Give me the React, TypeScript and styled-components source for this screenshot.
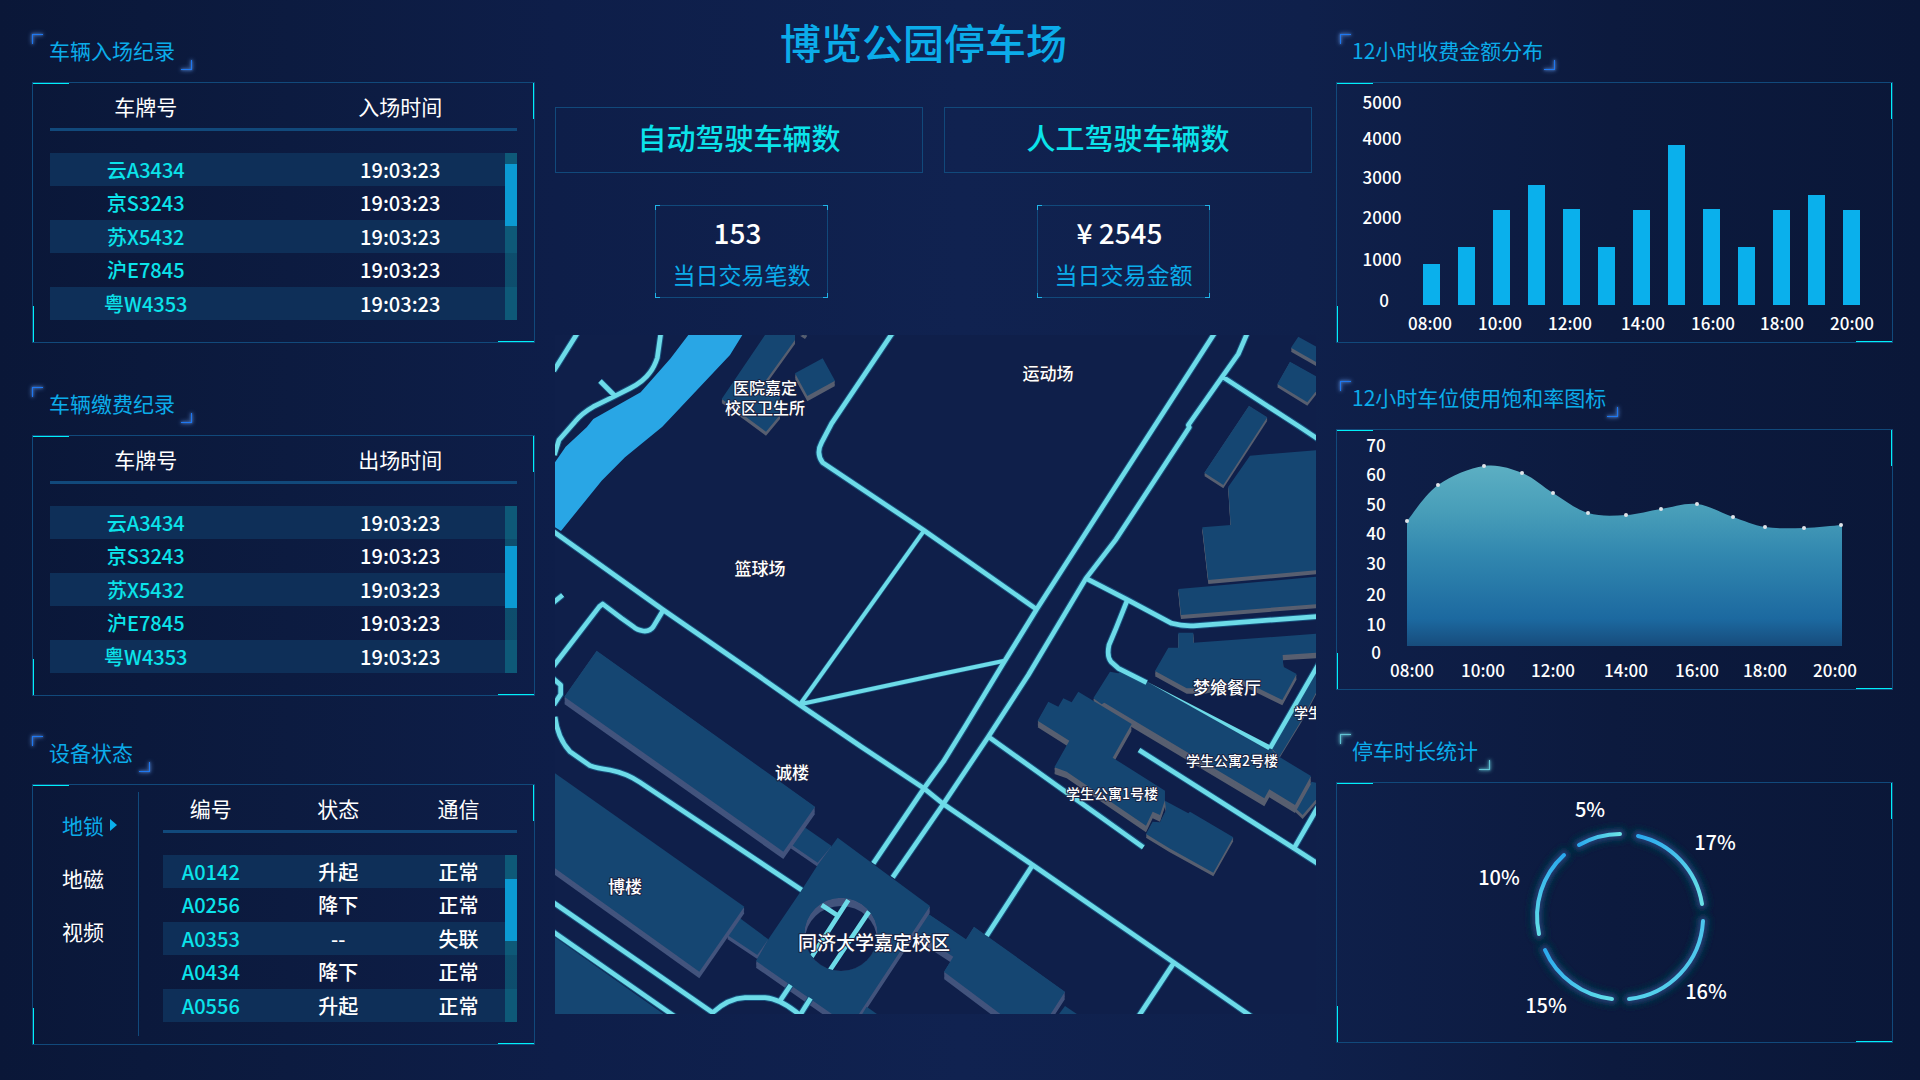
import React, { useState } from "react";
import styled, { createGlobalStyle, css } from "styled-components";

const sans = `"Noto Sans CJK SC", "Noto Sans", sans-serif`;

const color = {
  heading: "#0bacea",
  cyan: "#0be3ea",
  accent: "#00f0f8",
  line: "#11497b",
  stripe: "#0e2f58",
  bar: "#0ab0ec",
  map: "#0f1f4a",
  roof: "#154672",
  road: "#6ddbe8",
};

const GlobalStyle = createGlobalStyle`
  *, *::before, *::after { box-sizing: border-box; }
  body {
    margin: 0;
    min-height: 100vh;
    color: #fff;
    font-family: ${sans};
    background: #0d1c44 linear-gradient(90deg, #0a1738 0%, #0c1b40 15%, #0e1e49 29%, #102250 50%, #0f204b 68%, #0c1a3e 84%, #0a1738 100%);
  }
`;

const Dashboard = styled.main`
  display: grid;
  grid-template-columns: 503fr 761fr 557fr;
  column-gap: 20px;
  align-items: start;
  padding: 0 27px 32px 32px;
`;

const SideColumn = styled.div`
  display: flex;
  flex-direction: column;
  padding-top: 34px;
  min-width: 0;
`;

const Section = styled.section<{ $top?: number }>`
  display: flex;
  flex-direction: column;
  align-items: stretch;
  gap: 12px;
  margin-top: ${(p) => p.$top ?? 0}px;
`;

const Heading = styled.h2<{ $tone?: string; $tight?: boolean }>`
  position: relative;
  align-self: flex-start;
  height: 36px;
  margin: 0 0 0 ${(p) => (p.$tight ? 4 : 0)}px;
  padding: 0 ${(p) => (p.$tight ? 12 : 17)}px;
  color: ${color.heading};
  font-size: 21px;
  font-weight: 400;
  line-height: 32px;

  &::before,
  &::after {
    content: "";
    position: absolute;
    width: 11px;
    height: 10px;
    border: 0 solid ${(p) => p.$tone ?? "#1f78f0"};
    filter: drop-shadow(0 0 1px ${(p) => p.$tone ?? "#4a83d8"})
      drop-shadow(0 0 2px ${(p) => p.$tone ?? "#5a8fe0"});
  }
  &::before {
    top: 0;
    left: 0;
    border-width: 1px 0 0 1px;
  }
  &::after {
    right: 0;
    bottom: 0;
    border-width: 0 1px 1px 0;
  }
`;

const accentFill = `linear-gradient(${color.accent}, ${color.accent})`;

const Panel = styled.div`
  display: flex;
  min-height: 261px;
  border: 1px solid ${color.line};
  background:
    ${accentFill} 0 0 / 36px 1px no-repeat,
    ${accentFill} 100% 0 / 1px 36px no-repeat,
    ${accentFill} 0 100% / 1px 36px no-repeat,
    ${accentFill} 100% 100% / 36px 1px no-repeat;
`;

const TableArea = styled.div<{ $inset: number }>`
  position: relative;
  flex: 1;
  margin: 0 17px 22px ${(p) => p.$inset}px;
`;

const Table = styled.table<{ $columns: 2 | 3 }>`
  width: 100%;
  border-collapse: separate;
  border-spacing: 0;
  table-layout: fixed;
  font-size: 20px;
  line-height: 30px;
  text-align: center;

  th {
    height: 48px;
    padding: 0;
    border-bottom: 3px solid ${color.line};
    font-size: 21px;
    font-weight: 400;
  }
  tbody::before {
    content: "";
    display: block;
    height: 22px;
  }
  tbody tr {
    height: 33px;
  }
  tbody tr:nth-child(odd) {
    background: ${color.stripe};
  }
  tbody tr:nth-child(even) {
    height: 34px;
  }
  td {
    padding: 0;
    font-weight: 500;
  }
  td:first-child {
    color: ${color.cyan};
  }

  ${(p) =>
    p.$columns === 2
      ? css`
          th:first-child,
          td:first-child {
            width: 50%;
            padding-right: 42px;
          }
        `
      : css`
          th:first-child {
            width: 27%;
          }
          th:nth-child(2) {
            width: 45%;
          }
          th:last-child,
          td:last-child {
            padding-right: 18px;
          }
        `}
`;

const Track = styled.div`
  position: absolute;
  top: 70px;
  right: 0;
  bottom: 0;
  width: 12px;
  background: rgba(14, 180, 190, 0.32);
`;

const Thumb = styled.div`
  height: 62px;
  background: #0b9ad3;
`;

const DeviceNav = styled.nav`
  display: flex;
  flex-direction: column;
  width: 106px;
  margin: 7px 0 8px;
  padding-top: 6px;
  border-right: 1px solid ${color.line};
`;

const NavButton = styled.button<{ $active: boolean }>`
  display: flex;
  align-items: center;
  gap: 6px;
  height: 53px;
  padding: 0 0 0 29px;
  border: 0;
  background: none;
  color: ${(p) => (p.$active ? color.heading : "#fff")};
  font: 400 21px/30px ${sans};
  cursor: pointer;

  &::after {
    content: "";
    display: ${(p) => (p.$active ? "block" : "none")};
    border: solid transparent;
    border-width: 6px 0 6px 7px;
    border-left-color: ${color.bar};
  }
`;

const Center = styled.div`
  display: flex;
  flex-direction: column;
  min-width: 0;
`;

const Title = styled.h1`
  margin: 0;
  padding: 16px 24px 41px 0;
  color: ${color.heading};
  font-size: 41px;
  font-weight: 500;
  line-height: 50px;
  text-align: center;
`;

const ModeRow = styled.div`
  display: grid;
  grid-template-columns: 1fr 1fr;
  gap: 21px;
  padding-right: 4px;
`;

const ModeButton = styled.button`
  height: 66px;
  padding: 0 0 7px;
  border: 1px solid ${color.line};
  background: none;
  color: ${color.cyan};
  font: 500 29px/40px ${sans};
  cursor: pointer;
`;

const StatRow = styled.div`
  display: flex;
  justify-content: space-between;
  margin: 32px 106px 37px 100px;
`;

const edge = "linear-gradient(#1fb4e8, #1fb4e8)";

const Stat = styled.dl`
  position: relative;
  display: flex;
  flex-direction: column-reverse;
  justify-content: flex-end;
  width: 173px;
  height: 93px;
  margin: 0;
  padding-top: 7px;
  border: 1px solid ${color.line};
  text-align: center;

  &::after {
    content: "";
    position: absolute;
    inset: -1px;
    background:
      ${edge} 0 0 / 5px 1px no-repeat,
      ${edge} 0 0 / 1px 5px no-repeat,
      ${edge} 100% 0 / 5px 1px no-repeat,
      ${edge} 100% 0 / 1px 5px no-repeat,
      ${edge} 0 100% / 5px 1px no-repeat,
      ${edge} 0 100% / 1px 5px no-repeat,
      ${edge} 100% 100% / 5px 1px no-repeat,
      ${edge} 100% 100% / 1px 5px no-repeat;
  }
`;

const StatLabel = styled.dt`
  margin-top: 4px;
  color: ${color.heading};
  font-size: 23px;
  line-height: 38px;
`;

const StatValue = styled.dd`
  margin: 0;
  padding-right: 8px;
  font-size: 28px;
  font-weight: 500;
  line-height: 38px;
`;

const Drawing = styled.svg`
  display: block;
  width: 100%;
  height: auto;
  overflow: hidden;
  fill: #fff;
  font-family: ${sans};
  text-anchor: middle;
`;

const MapLabel = styled.text`
  font-weight: 500;
  paint-order: stroke;
  stroke: #1a2140;
  stroke-width: 2px;
  stroke-linejoin: round;
`;

/* ---------- tables ---------- */

type DataTableProps = {
  name: string;
  head: string[];
  rows: string[][];
  inset: number;
  scroll: number;
};

function DataTable({ name, head, rows, inset, scroll }: DataTableProps) {
  return (
    <TableArea $inset={inset}>
      <Table $columns={head.length === 2 ? 2 : 3} aria-label={name}>
        <thead>
          <tr>
            {head.map((h) => (
              <th key={h} scope="col">{h}</th>
            ))}
          </tr>
        </thead>
        <tbody>
          {rows.map((row) => (
            <tr key={row[0]}>
              {row.map((cell, i) => (
                <td key={i}>{cell}</td>
              ))}
            </tr>
          ))}
        </tbody>
      </Table>
      <Track aria-hidden="true">
        <Thumb style={{ marginTop: scroll }} />
      </Track>
    </TableArea>
  );
}

const plates = ["云A3434", "京S3243", "苏X5432", "沪E7845", "粤W4353"];
const records = plates.map((p) => [p, "19:03:23"]);

const devices = [
  ["A0142", "升起", "正常"],
  ["A0256", "降下", "正常"],
  ["A0353", "--", "失联"],
  ["A0434", "降下", "正常"],
  ["A0556", "升起", "正常"],
];

/* ---------- charts ---------- */

type Mark = { text: string; x: number; y: number };

function Marks({ items, size }: { items: Mark[]; size: number }) {
  return (
    <g fontSize={size} fontWeight={500}>
      {items.map((m) => (
        <text key={m.text} x={m.x} y={m.y} dy=".37em">{m.text}</text>
      ))}
    </g>
  );
}

const hours = ["08:00", "10:00", "12:00", "14:00", "16:00", "18:00", "20:00"];

const feeHeights = [41, 58, 95, 120, 96, 58, 95, 160, 96, 58, 95, 110, 95];
const feeTicks: Mark[] = [
  { text: "5000", x: 45, y: 20 },
  { text: "4000", x: 45, y: 56 },
  { text: "3000", x: 45, y: 95 },
  { text: "2000", x: 45, y: 135 },
  { text: "1000", x: 45, y: 177 },
  { text: "0", x: 47, y: 218 },
];
const feeHourX = [93, 163, 233, 306, 376, 445, 515];

function FeeChart() {
  return (
    <Drawing viewBox="0 0 555 259" role="img" aria-label="12小时收费金额分布">
      <Marks items={feeTicks} size={17} />
      <g fill={color.bar}>
        {feeHeights.map((h, i) => (
          <rect key={i} x={86 + i * 35} y={222 - h} width={17} height={h} />
        ))}
      </g>
      <Marks items={hours.map((text, i) => ({ text, x: feeHourX[i], y: 241 }))} size={17} />
    </Drawing>
  );
}

const usage: [number, number][] = [
  [70, 91], [101, 55], [147, 36], [185, 43], [216, 63], [251, 83], [289, 85],
  [324, 79], [360, 74], [396, 87], [428, 97], [467, 98], [504, 95],
];
const usageY = [16, 45, 75, 104, 134, 165, 195, 223];
const usageTicks: Mark[] = ["70", "60", "50", "40", "30", "20", "10", "0"].map((text, i) => ({
  text,
  x: 39,
  y: usageY[i],
}));
const usageHourX = [75, 146, 216, 289, 360, 428, 498];

function smooth(points: [number, number][]) {
  let d = `M${points[0][0]},${points[0][1]}`;
  for (let i = 0; i < points.length - 1; i++) {
    const a = points[i - 1] ?? points[i];
    const b = points[i];
    const c = points[i + 1];
    const e = points[i + 2] ?? c;
    d += `C${b[0] + (c[0] - a[0]) / 6},${b[1] + (c[1] - a[1]) / 6} ${c[0] - (e[0] - b[0]) / 6},${c[1] - (e[1] - b[1]) / 6} ${c[0]},${c[1]}`;
  }
  return d;
}

function UsageChart() {
  return (
    <Drawing viewBox="0 0 555 259" role="img" aria-label="12小时车位使用饱和率图标">
      <defs>
        <linearGradient id="usage" x1="0" y1="0" x2="0" y2="1">
          <stop offset="0" stopColor="#5cafc3" />
          <stop offset=".25" stopColor="#489eb9" />
          <stop offset=".5" stopColor="#3187af" />
          <stop offset=".85" stopColor="#1c69a0" />
          <stop offset="1" stopColor="#174c7c" />
        </linearGradient>
      </defs>
      <Marks items={usageTicks} size={17} />
      <path d={`${smooth(usage)}L505,95V216H70Z`} fill="url(#usage)" />
      <g fill="#dfe3e8">
        {usage.map(([x, y]) => (
          <circle key={x} cx={x} cy={y} r={2} />
        ))}
      </g>
      <Marks items={hours.map((text, i) => ({ text, x: usageHourX[i], y: 241 }))} size={17} />
    </Drawing>
  );
}

const arcs = [
  { from: [301, 53], to: [365, 121] },
  { from: [366, 138], to: [292, 216] },
  { from: [275, 216], to: [208, 167] },
  { from: [202, 151], to: [227, 72] },
  { from: [242, 62], to: [283, 51] },
];
const arcEnds = [
  ["#2aa9ee", "#6be3e6"],
  ["#4cc4ec", "#55d2ec"],
  ["#62dfe8", "#2aa9ee"],
  ["#62dfe8", "#2aa9ee"],
  ["#2aa9ee", "#6be3e6"],
];
const shares: Mark[] = [
  { text: "5%", x: 253, y: 27 },
  { text: "17%", x: 378, y: 60 },
  { text: "10%", x: 162, y: 95 },
  { text: "16%", x: 369, y: 209 },
  { text: "15%", x: 209, y: 223 },
];

function DurationChart() {
  const paths = arcs.map((a) => `M${a.from}A83,83 0 0 1 ${a.to}`);
  return (
    <Drawing viewBox="0 0 555 259" role="img" aria-label="停车时长统计">
      <defs>
        <filter id="halo" x="-20%" y="-20%" width="140%" height="140%">
          <feGaussianBlur stdDeviation="2" />
        </filter>
        {arcs.map((a, i) => (
          <linearGradient
            key={i}
            id={`arc${i}`}
            gradientUnits="userSpaceOnUse"
            x1={a.from[0]}
            y1={a.from[1]}
            x2={a.to[0]}
            y2={a.to[1]}
          >
            <stop offset="0" stopColor={arcEnds[i][0]} />
            <stop offset="1" stopColor={arcEnds[i][1]} />
          </linearGradient>
        ))}
      </defs>
      <g fill="none" strokeLinecap="round">
        <g filter="url(#halo)">
          <path d={paths.join("")} stroke="#05283f" strokeWidth={19} />
          <path d={paths.join("")} stroke="#243a70" strokeWidth={9} />
        </g>
        {paths.map((d, i) => (
          <path key={i} d={d} stroke={`url(#arc${i})`} strokeWidth={4} />
        ))}
      </g>
      <Marks items={shares} size={20} />
    </Drawing>
  );
}

/* ---------- campus map ---------- */

type Block = { at: string; depth: number; wall?: string };

const warm = "#585f70";
const cool = "#43547d";

const blocks: Block[] = [
  { at: "630,0 720,0 720,15 632,137 675,185 675,240 633,290 500,192", depth: 12, wall: warm },
  { at: "720,115 803,70 840,137 757,183", depth: 16, wall: warm },
  { at: "735,-8 757,-8 750,2", depth: 10, wall: warm },
  { at: "2230,5 2290,38 2290,85 2208,38", depth: 12, wall: warm },
  { at: "2205,80 2290,128 2290,160 2257,202 2167,147", depth: 10, wall: warm },
  { at: "2082,212 2137,247 2005,450 1948,413", depth: 10, wall: warm },
  { at: "2085,362 2290,345 2290,705 1960,735 1942,577 2027,570 2020,455", depth: 12, wall: warm },
  { at: "1870,762 2290,725 2290,807 1878,840", depth: 12, wall: warm },
  { at: "1870,893 1915,893 1915,923 2290,896 2290,953 2183,960 2185,995 2225,1017 2182,1095 2060,1035 1950,1060 1895,1060 1800,1008 1840,938 1870,938", depth: 16, wall: warm },
  { at: "2290,1010 2290,1060 2240,1155 2173,1265 2150,1240", depth: 5, wall: warm },
  { at: "2270,1340 2290,1345 2290,1385 2243,1440 2220,1418", depth: 12, wall: warm },
  { at: "1665,1010 1690,1015 1700,1008 1775,1040 2145,1240 2175,1267 2268,1323 2220,1410 2143,1363 2128,1390 1648,1103 1640,1108 1615,1090", depth: 24, wall: warm },
  { at: "1480,1100 1510,1115 1525,1090 1550,1102 1570,1070 1730,1167 1673,1268 1830,1367 1830,1395 1815,1440 1793,1430 1773,1472 1535,1310 1498,1297 1543,1217 1448,1157", depth: 20, wall: warm },
  { at: "1830,1397 1900,1435 1905,1430 2035,1507 1975,1613 1843,1540 1773,1497 1793,1460 1815,1462 1833,1425", depth: 11, wall: warm },
  { at: "747,1475 830,1533 788,1583 707,1528", depth: 12 },
  { at: "125,947 780,1415 685,1550 28,1085", depth: 22 },
  { at: "555,1750 640,1813 607,1860 517,1800", depth: 12 },
  { at: "0,1315 568,1715 433,1910 0,1600", depth: 20 },
  { at: "1115,1733 1233,1813 1257,1775 1530,1970 1485,2040 1340,2040 1167,1910 1195,1865 1075,1787", depth: 22 },
  { at: "848,1508 1125,1713 910,2040 835,2040 603,1878 640,1813 740,1665 788,1590 830,1533", depth: 20 },
  { at: "0,1807 330,2040 0,2040", depth: 0 },
  { at: "1530,2013 1570,2040 1510,2040", depth: 0 },
  { at: "935,2015 970,2040 920,2040", depth: 0 },
];

const roads = [
  "M70,-10L-4,108",
  "M318,-10L307,68Q298,95 285,112Q265,140 225,160L180,183L115,215Q80,235 60,260L12,315L-2,360",
  "M135,138L180,183",
  "M1015,-10L830,265L800,322Q782,355 803,383L1105,585L1445,823",
  "M-10,586L325,825L607,1020L735,1110L920,1236L1107,1360L1165,1407L1433,1590L1857,1883L2090,2045",
  "M325,825L295,875Q285,890 265,888Q245,885 235,875L200,850L143,807L133,815L-5,994",
  "M23,780L-5,803",
  "M-6,1030L17,1050L17,1078L-4,1110",
  "M0,1145Q8,1210 45,1250L105,1292Q125,1300 165,1305Q215,1315 255,1342L740,1665",
  "M1979,-6L1675,465L1445,823L1345,985L1230,1175L1165,1280L1107,1360L955,1585",
  "M2077,-6L2050,57L2002,125L1900,270L1903,277L1683,613L1593,730L1420,1020L1300,1205L1165,1407L1013,1627",
  "M2002,125L2233,275L2295,316",
  "M1593,730L1715,793L1850,865Q1885,875 1925,872L2295,844",
  "M1715,800L1683,880L1662,930Q1655,965 1668,980L1690,1000L1775,1043",
  "M2145,1240L2295,980",
  "M1300,1205L1765,1537",
  "M1752,1245L2217,1540L2295,1590",
  "M2295,1405L2217,1540",
  "M1433,1590L1295,1802",
  "M1857,1883L1750,2045",
  "M-6,1702L473,2033Q520,1990 570,1988L630,1988Q680,1992 740,2045",
  "M-6,1790L360,2045",
  "M707,1950L670,2005",
  "M767,1990L732,2045",
];

const footways = ["M1105,590L735,1108", "M735,1108L1155,1018L1345,978"];

const mapLabels: (Mark & { size: number })[] = [
  { text: "运动场", x: 493, y: 39, size: 17 },
  { text: "医院嘉定", x: 210, y: 53, size: 16 },
  { text: "校区卫生所", x: 210, y: 73, size: 16 },
  { text: "篮球场", x: 205, y: 234, size: 17 },
  { text: "诚楼", x: 237, y: 438, size: 17 },
  { text: "博楼", x: 70, y: 552, size: 17 },
  { text: "同济大学嘉定校区", x: 319, y: 608, size: 19 },
  { text: "梦飨餐厅", x: 672, y: 353, size: 17 },
  { text: "学生公寓2号楼", x: 677, y: 426, size: 14 },
  { text: "学生公寓1号楼", x: 557, y: 459, size: 14 },
  { text: "学生", x: 753, y: 378, size: 14 },
];

function Building({ at, depth, wall = cool }: Block) {
  const layers: number[] = [];
  for (let dy = depth; dy > 0; dy -= 4) layers.push(dy);
  return (
    <g>
      {layers.map((dy) => (
        <polygon key={dy} points={at} fill={wall} transform={`translate(0 ${dy})`} />
      ))}
      <polygon points={at} fill={color.roof} />
    </g>
  );
}

function CampusMap() {
  return (
    <Drawing viewBox="0 0 761 679" role="img" aria-label="同济大学嘉定校区">
      <defs>
        <clipPath id="court">
          <circle cx="858" cy="1798" r="110" />
        </clipPath>
      </defs>
      <rect width="761" height="679" fill={color.map} />
      <g transform="scale(0.33333)">
        <polygon
          fill="#29a6e5"
          points="400,0 562,0 525,60 322,275 210,367 140,437 18,588 0,577 0,382 32,335 95,277 115,252 257,172 347,70"
        />
        {blocks.map((b) => (
          <Building key={b.at} {...b} />
        ))}
        <g fill="none" strokeLinejoin="round">
          <path d={roads.join("")} stroke="#17507c" strokeWidth={20} />
          <path d={footways.join("")} stroke="#17507c" strokeWidth={16} />
          <path d={roads.join("")} stroke={color.road} strokeWidth={14} />
          <path d={footways.join("")} stroke={color.road} strokeWidth={12} />
        </g>
        <polygon points="1772,1038 2150,1233 2140,1245" fill={color.road} />
        <g clipPath="url(#court)">
          <circle cx="858" cy="1798" r="110" fill={cool} />
          <ellipse cx="858" cy="1815" rx="108" ry="102" fill={color.map} />
          <path
            d="M880,1695L770,1865M942,1730L825,1905M800,1710L850,1743"
            stroke={color.road}
            strokeWidth={14}
          />
        </g>
      </g>
      {mapLabels.map((l) => (
        <MapLabel key={l.text} x={l.x} y={l.y} dy=".37em" fontSize={l.size}>
          {l.text}
        </MapLabel>
      ))}
    </Drawing>
  );
}

/* ---------- page ---------- */

const deviceKinds = ["地锁", "地磁", "视频"];

export default function App() {
  const [kind, setKind] = useState(deviceKinds[0]);

  return (
    <>
      <GlobalStyle />
      <Dashboard>
        <SideColumn>
          <Section>
            <Heading>车辆入场纪录</Heading>
            <Panel>
              <DataTable name="车辆入场纪录" head={["车牌号", "入场时间"]} rows={records} inset={17} scroll={11} />
            </Panel>
          </Section>
          <Section $top={44}>
            <Heading>车辆缴费纪录</Heading>
            <Panel>
              <DataTable name="车辆缴费纪录" head={["车牌号", "出场时间"]} rows={records} inset={17} scroll={40} />
            </Panel>
          </Section>
          <Section $top={40}>
            <Heading>设备状态</Heading>
            <Panel>
              <DeviceNav>
                {deviceKinds.map((k) => (
                  <NavButton key={k} type="button" $active={k === kind} onClick={() => setKind(k)}>
                    {k}
                  </NavButton>
                ))}
              </DeviceNav>
              <DataTable name="设备状态" head={["编号", "状态", "通信"]} rows={devices} inset={24} scroll={24} />
            </Panel>
          </Section>
        </SideColumn>

        <Center>
          <Title>博览公园停车场</Title>
          <ModeRow>
            <ModeButton type="button">自动驾驶车辆数</ModeButton>
            <ModeButton type="button">人工驾驶车辆数</ModeButton>
          </ModeRow>
          <StatRow>
            <Stat>
              <StatLabel>当日交易笔数</StatLabel>
              <StatValue>153</StatValue>
            </Stat>
            <Stat>
              <StatLabel>当日交易金额</StatLabel>
              <StatValue>¥ 2545</StatValue>
            </Stat>
          </StatRow>
          <CampusMap />
        </Center>

        <SideColumn>
          <Section>
            <Heading $tight>12小时收费金额分布</Heading>
            <Panel>
              <FeeChart />
            </Panel>
          </Section>
          <Section $top={38}>
            <Heading $tight>12小时车位使用饱和率图标</Heading>
            <Panel>
              <UsageChart />
            </Panel>
          </Section>
          <Section $top={44}>
            <Heading $tight $tone="#62c4d4">停车时长统计</Heading>
            <Panel>
              <DurationChart />
            </Panel>
          </Section>
        </SideColumn>
      </Dashboard>
    </>
  );
}
